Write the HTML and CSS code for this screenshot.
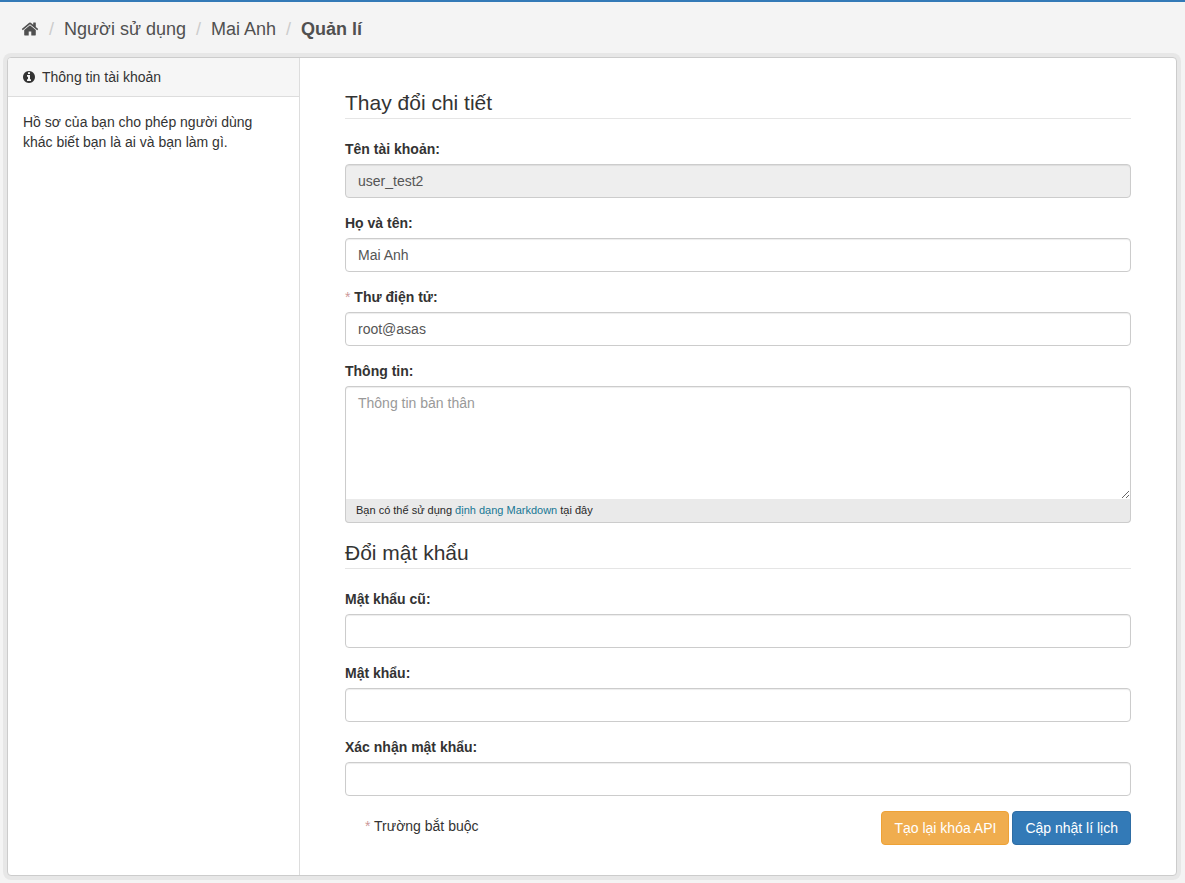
FILE: index.html
```html
<!DOCTYPE html>
<html lang="vi">
<head>
<meta charset="utf-8">
<meta name="viewport" content="width=device-width, initial-scale=1">
<title>Quản lí - Mai Anh</title>
<link rel="stylesheet" href="styles.css">
</head>
<body>
<div class="page">
  <nav class="toolbar" aria-label="Breadcrumb">
    <ol class="breadcrumb">
      <li class="home"><a href="#" aria-label="Trang chủ"><svg class="icon-home" viewBox="0 0 1792 1792" aria-hidden="true"><path d="M1472 992v480q0 26-19 45t-45 19h-384v-384h-256v384h-384q-26 0-45-19t-19-45v-480q0-1 .5-3t.5-3l575-474 575 474q1 2 1 6zm223-69l-62 74q-8 9-21 11h-3q-13 0-21-7l-692-577-692 577q-12 8-24 7-13-2-21-11l-62-74q-8-10-7-23.5t11-21.5l719-599q32-26 76-26t76 26l244 204v-195q0-14 9-23t23-9h192q14 0 23 9t9 23v408l219 182q10 8 11 21.5t-7 23.5z"/></svg></a></li>
      <li><a href="#">Người sử dụng</a></li>
      <li><a href="#">Mai Anh</a></li>
      <li class="active"><a href="#">Quản lí</a></li>
    </ol>
  </nav>

  <div class="wrapper">
    <aside class="sidebar">
      <h2 class="module-heading"><svg class="icon-info" viewBox="128 128 1536 1536" aria-hidden="true"><path d="M1152 1376v-160q0-14-9-23t-23-9h-96v-512q0-14-9-23t-23-9h-320q-14 0-23 9t-9 23v160q0 14 9 23t23 9h96v320h-96q-14 0-23 9t-9 23v160q0 14 9 23t23 9h448q14 0 23-9t9-23zm-128-896v-160q0-14-9-23t-23-9h-192q-14 0-23 9t-9 23v160q0 14 9 23t23 9h192q14 0 23-9t9-23zm640 416q0 209-103 385.5t-279.5 279.5-385.5 103-385.5-103-279.5-279.5-103-385.5 103-385.5 279.5-279.5 385.5-103 385.5 103 279.5 279.5 103 385.5z"/></svg>Thông tin tài khoản</h2>
      <p class="module-content">Hồ sơ của bạn cho phép người dùng khác biết bạn là ai và bạn làm gì.</p>
    </aside>

    <main class="primary">
      <form>
        <fieldset>
          <legend>Thay đổi chi tiết</legend>
          <div class="form-group">
            <label for="username">Tên tài khoản:</label>
            <input class="form-control" id="username" type="text" value="user_test2" readonly>
          </div>
          <div class="form-group">
            <label for="fullname">Họ và tên:</label>
            <input class="form-control" id="fullname" type="text" value="Mai Anh">
          </div>
          <div class="form-group">
            <label for="email"><span class="required">*</span> Thư điện tử:</label>
            <input class="form-control" id="email" type="email" value="root@asas">
          </div>
          <div class="form-group">
            <label for="about">Thông tin:</label>
            <div class="editor">
              <textarea class="form-control" id="about" rows="5" placeholder="Thông tin bản thân"></textarea>
              <div class="editor-info">Bạn có thể sử dụng <a href="#">định dạng Markdown</a> tại đây</div>
            </div>
          </div>
        </fieldset>
        <fieldset>
          <legend>Đổi mật khẩu</legend>
          <div class="form-group">
            <label for="old-password">Mật khẩu cũ:</label>
            <input class="form-control" id="old-password" type="password">
          </div>
          <div class="form-group">
            <label for="password">Mật khẩu:</label>
            <input class="form-control" id="password" type="password">
          </div>
          <div class="form-group">
            <label for="confirm">Xác nhận mật khẩu:</label>
            <input class="form-control" id="confirm" type="password">
          </div>
        </fieldset>
        <div class="form-actions">
          <p class="required-note"><span class="required">*</span> Trường bắt buộc</p>
          <button class="btn btn-warning" type="button">Tạo lại khóa API</button>
          <button class="btn btn-primary" type="submit">Cập nhật lí lịch</button>
        </div>
      </form>
    </main>
  </div>
</div>
</body>
</html>
```

FILE: styles.css
```css
* {
  box-sizing: border-box;
}

body {
  margin: 0;
  background: #f4f4f4;
  color: #333;
  font: 14px/20px "Liberation Sans", Arial, sans-serif;
}

.page {
  border-top: 2px solid #337ab7;
  padding: 0 8px 7px 7px;
}

.toolbar {
  padding: 14px 14px 15px;
}

.breadcrumb {
  display: flex;
  flex-wrap: wrap;
  align-items: center;
  margin: 0;
  padding: 0;
  list-style: none;
  font-size: 18px;
  line-height: 26px;
}

.breadcrumb li {
  display: flex;
  align-items: center;
}

.breadcrumb li + li::before {
  content: "/";
  padding: 0 10px;
  color: #ccc;
}

.breadcrumb a {
  color: #505050;
  text-decoration: none;
}

.breadcrumb .active {
  font-weight: bold;
}

.breadcrumb .active::before {
  font-weight: normal;
}

.icon-home {
  display: block;
  width: 18px;
  height: 18px;
  fill: #505050;
}

.wrapper {
  display: grid;
  grid-template-columns: 1fr 3fr;
  border: 1px solid #ccc;
  border-radius: 4px;
  background: #fff;
  box-shadow: 0 0 0 4px rgba(0, 0, 0, 0.05);
}

.sidebar {
  border-right: 1px solid #ddd;
}

.module-heading {
  display: flex;
  align-items: center;
  gap: 7px;
  margin: 0;
  padding: 9px 15px;
  border-bottom: 1px solid #ddd;
  border-radius: 3px 0 0 0;
  background: #f6f6f6;
  font-size: 14px;
  font-weight: normal;
}

.icon-info {
  width: 12px;
  height: 12px;
  fill: #333;
}

.module-content {
  margin: 0;
  padding: 15px;
}

.primary {
  min-width: 0;
  padding: 30px 45px;
}

fieldset {
  min-width: 0;
  margin: 0;
  padding: 0;
  border: 0;
}

legend {
  display: block;
  width: 100%;
  margin: 0 0 20px;
  padding: 0;
  border-bottom: 1px solid #e5e5e5;
  font-size: 21px;
  line-height: 30px;
}

.form-group {
  margin-bottom: 15px;
}

label {
  display: block;
  margin-bottom: 5px;
  font-weight: bold;
}

.required {
  color: #c99;
  font-weight: normal;
}

.form-control {
  display: block;
  width: 100%;
  height: 34px;
  margin: 0;
  padding: 6px 12px;
  border: 1px solid #ccc;
  border-radius: 4px;
  background: #fff;
  box-shadow: inset 0 1px 1px rgba(0, 0, 0, 0.075);
  color: #555;
  font: inherit;
}

.form-control::placeholder {
  color: #999;
}

.form-control[readonly] {
  background: #eee;
}

textarea.form-control {
  height: auto;
  border-bottom: 0;
  border-radius: 4px 4px 0 0;
  resize: vertical;
}

.editor-info {
  padding: 1px 10px 2px;
  border: 1px solid #ccc;
  border-top: 0;
  border-radius: 0 0 4px 4px;
  background: #eaeaea;
  color: #282828;
  font-size: 11px;
}

.editor-info a {
  color: #187794;
  text-decoration: none;
}

.form-actions {
  display: flex;
  align-items: center;
  gap: 3px;
}

.required-note {
  margin: 0 auto 4px 0;
  padding-left: 20px;
}

.btn {
  padding: 6px 12px;
  border: 1px solid;
  border-radius: 4px;
  color: #fff;
  font: inherit;
  cursor: pointer;
}

.btn-warning {
  border-color: #eea236;
  background: #f0ad4e;
}

.btn-primary {
  border-color: #2e6da4;
  background: #337ab7;
}
```
